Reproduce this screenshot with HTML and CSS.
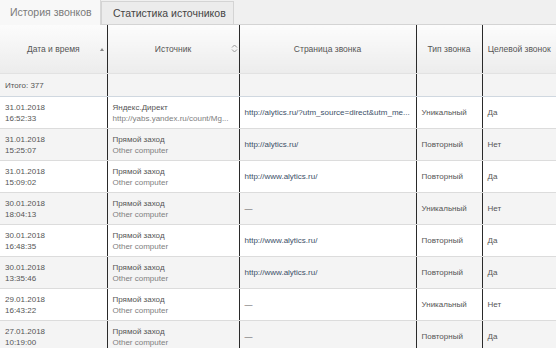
FILE: index.html
```html
<!DOCTYPE html>
<html>
<head>
  <meta charset="utf-8">
  <title>История звонков</title>
  <link rel="stylesheet" href="styles.css">
</head>
<body>
  <div class="tabs">
    <div class="tab active">История звонков</div>
    <div class="tab">Статистика источников</div>
    <div class="tabs-rest"></div>
  </div>

  <table class="calls">
    <colgroup>
      <col class="c-date">
      <col class="c-src">
      <col class="c-page">
      <col class="c-type">
      <col class="c-goal">
    </colgroup>
    <thead>
      <tr>
        <th class="sep">Дата и время <span class="sort-up"></span></th>
        <th class="sep">Источник
          <svg class="sort-both" width="7" height="9" viewBox="0 0 7 9"><path d="M1 3.5 L3.5 1 L6 3.5 M1 5.5 L3.5 8 L6 5.5" fill="none" stroke="#999" stroke-width="1"/></svg>
        </th>
        <th class="sep">Страница звонка</th>
        <th class="sep">Тип звонка</th>
        <th>Целевой звонок</th>
      </tr>
    </thead>
    <tbody>
      <tr class="total">
        <td class="sep">Итого: 377</td>
        <td class="sep"></td>
        <td class="sep"></td>
        <td class="sep"></td>
        <td></td>
      </tr>
      <tr>
        <td class="sep">31.01.2018<br>16:52:33</td>
        <td class="sep">Яндекс.Директ<br><span class="sub">http://yabs.yandex.ru/count/Mg...</span></td>
        <td class="sep"><span class="url">http://alytics.ru/?utm_source=direct&amp;utm_me...</span></td>
        <td class="sep">Уникальный</td>
        <td>Да</td>
      </tr>
      <tr>
        <td class="sep">31.01.2018<br>15:25:07</td>
        <td class="sep">Прямой заход<br><span class="sub">Other computer</span></td>
        <td class="sep"><span class="url">http://alytics.ru/</span></td>
        <td class="sep">Повторный</td>
        <td>Нет</td>
      </tr>
      <tr>
        <td class="sep">31.01.2018<br>15:09:02</td>
        <td class="sep">Прямой заход<br><span class="sub">Other computer</span></td>
        <td class="sep"><span class="url">http://www.alytics.ru/</span></td>
        <td class="sep">Повторный</td>
        <td>Да</td>
      </tr>
      <tr>
        <td class="sep">30.01.2018<br>18:04:13</td>
        <td class="sep">Прямой заход<br><span class="sub">Other computer</span></td>
        <td class="sep">—</td>
        <td class="sep">Уникальный</td>
        <td>Нет</td>
      </tr>
      <tr>
        <td class="sep">30.01.2018<br>16:48:35</td>
        <td class="sep">Прямой заход<br><span class="sub">Other computer</span></td>
        <td class="sep"><span class="url">http://www.alytics.ru/</span></td>
        <td class="sep">Повторный</td>
        <td>Да</td>
      </tr>
      <tr>
        <td class="sep">30.01.2018<br>13:35:46</td>
        <td class="sep">Прямой заход<br><span class="sub">Other computer</span></td>
        <td class="sep"><span class="url">http://www.alytics.ru/</span></td>
        <td class="sep">Повторный</td>
        <td>Да</td>
      </tr>
      <tr>
        <td class="sep">29.01.2018<br>16:43:22</td>
        <td class="sep">Прямой заход<br><span class="sub">Other computer</span></td>
        <td class="sep">—</td>
        <td class="sep">Уникальный</td>
        <td>Нет</td>
      </tr>
      <tr>
        <td class="sep">27.01.2018<br>10:19:00</td>
        <td class="sep">Прямой заход<br><span class="sub">Other computer</span></td>
        <td class="sep">—</td>
        <td class="sep">Повторный</td>
        <td>Да</td>
      </tr>
    </tbody>
  </table>
</body>
</html>
```

FILE: styles.css
```css
body {
  margin: 0;
  background: #ffffff;
  font-family: "Liberation Sans", Arial, sans-serif;
  color: #555;
  overflow: hidden;
}

/* onglets */
.tabs {
  display: flex;
  height: 25px;
  background: #f0f0f0;
}

.tab {
  font-size: 10.5px;
  line-height: 23px;
  padding: 0 7px 0 11px;
  color: #444;
  background: #ececec;
  border: 1px solid #d4d4d4;
  border-bottom: 1px solid #d4d4d4;
  margin-top: 1px;
  white-space: nowrap;
}

.tab.active {
  box-sizing: border-box;
  width: 101px;
  padding: 0 0 0 10px;
  color: #7a7a7a;
  background: #f8f8f8;
  border: none;
  border-right: 1px solid #d8d8d8;
  margin-top: 0;
  line-height: 25px;
}

.tabs-rest {
  flex: 1;
  border-bottom: 1px solid #d4d4d4;
}

/* tableau */
.calls {
  width: 556px;
  border-collapse: collapse;
  table-layout: fixed;
  font-size: 8px;
}

.c-date { width: 107px; }
.c-src { width: 132px; }
.c-page { width: 177px; }
.c-type { width: 66px; }
.c-goal { width: 74px; }

.calls th {
  height: 48px;
  font-weight: normal;
  font-size: 8.5px;
  color: #555;
  text-align: center;
  background: linear-gradient(#fcfcfc, #ececec);
  border-bottom: 1px solid #e2e2e2;
  position: relative;
  padding: 0 4px;
}

.calls .sep {
  border-right: 1px solid #2a2a2a;
}

.sort-up {
  position: absolute;
  right: 3px;
  top: 23px;
  border-left: 2.5px solid transparent;
  border-right: 2.5px solid transparent;
  border-bottom: 3px solid #888;
}

.sort-both {
  position: absolute;
  right: 1px;
  top: 19px;
}

.calls td {
  height: 31px;
  padding: 0 5px;
  line-height: 11px;
  border-bottom: 1px solid #dcdcdc;
  vertical-align: middle;
  white-space: nowrap;
  overflow: hidden;
}

.calls tbody tr:nth-child(odd) td {
  background: #f4f4f4;
}

.calls tr.total td {
  height: 22px;
  background: #dde6ef;
  color: #555;
  border-bottom: 1px solid #d0d8e0;
}

.calls td .sub {
  color: #808080;
}

.calls td .url {
  color: #3b5068;
}
```
